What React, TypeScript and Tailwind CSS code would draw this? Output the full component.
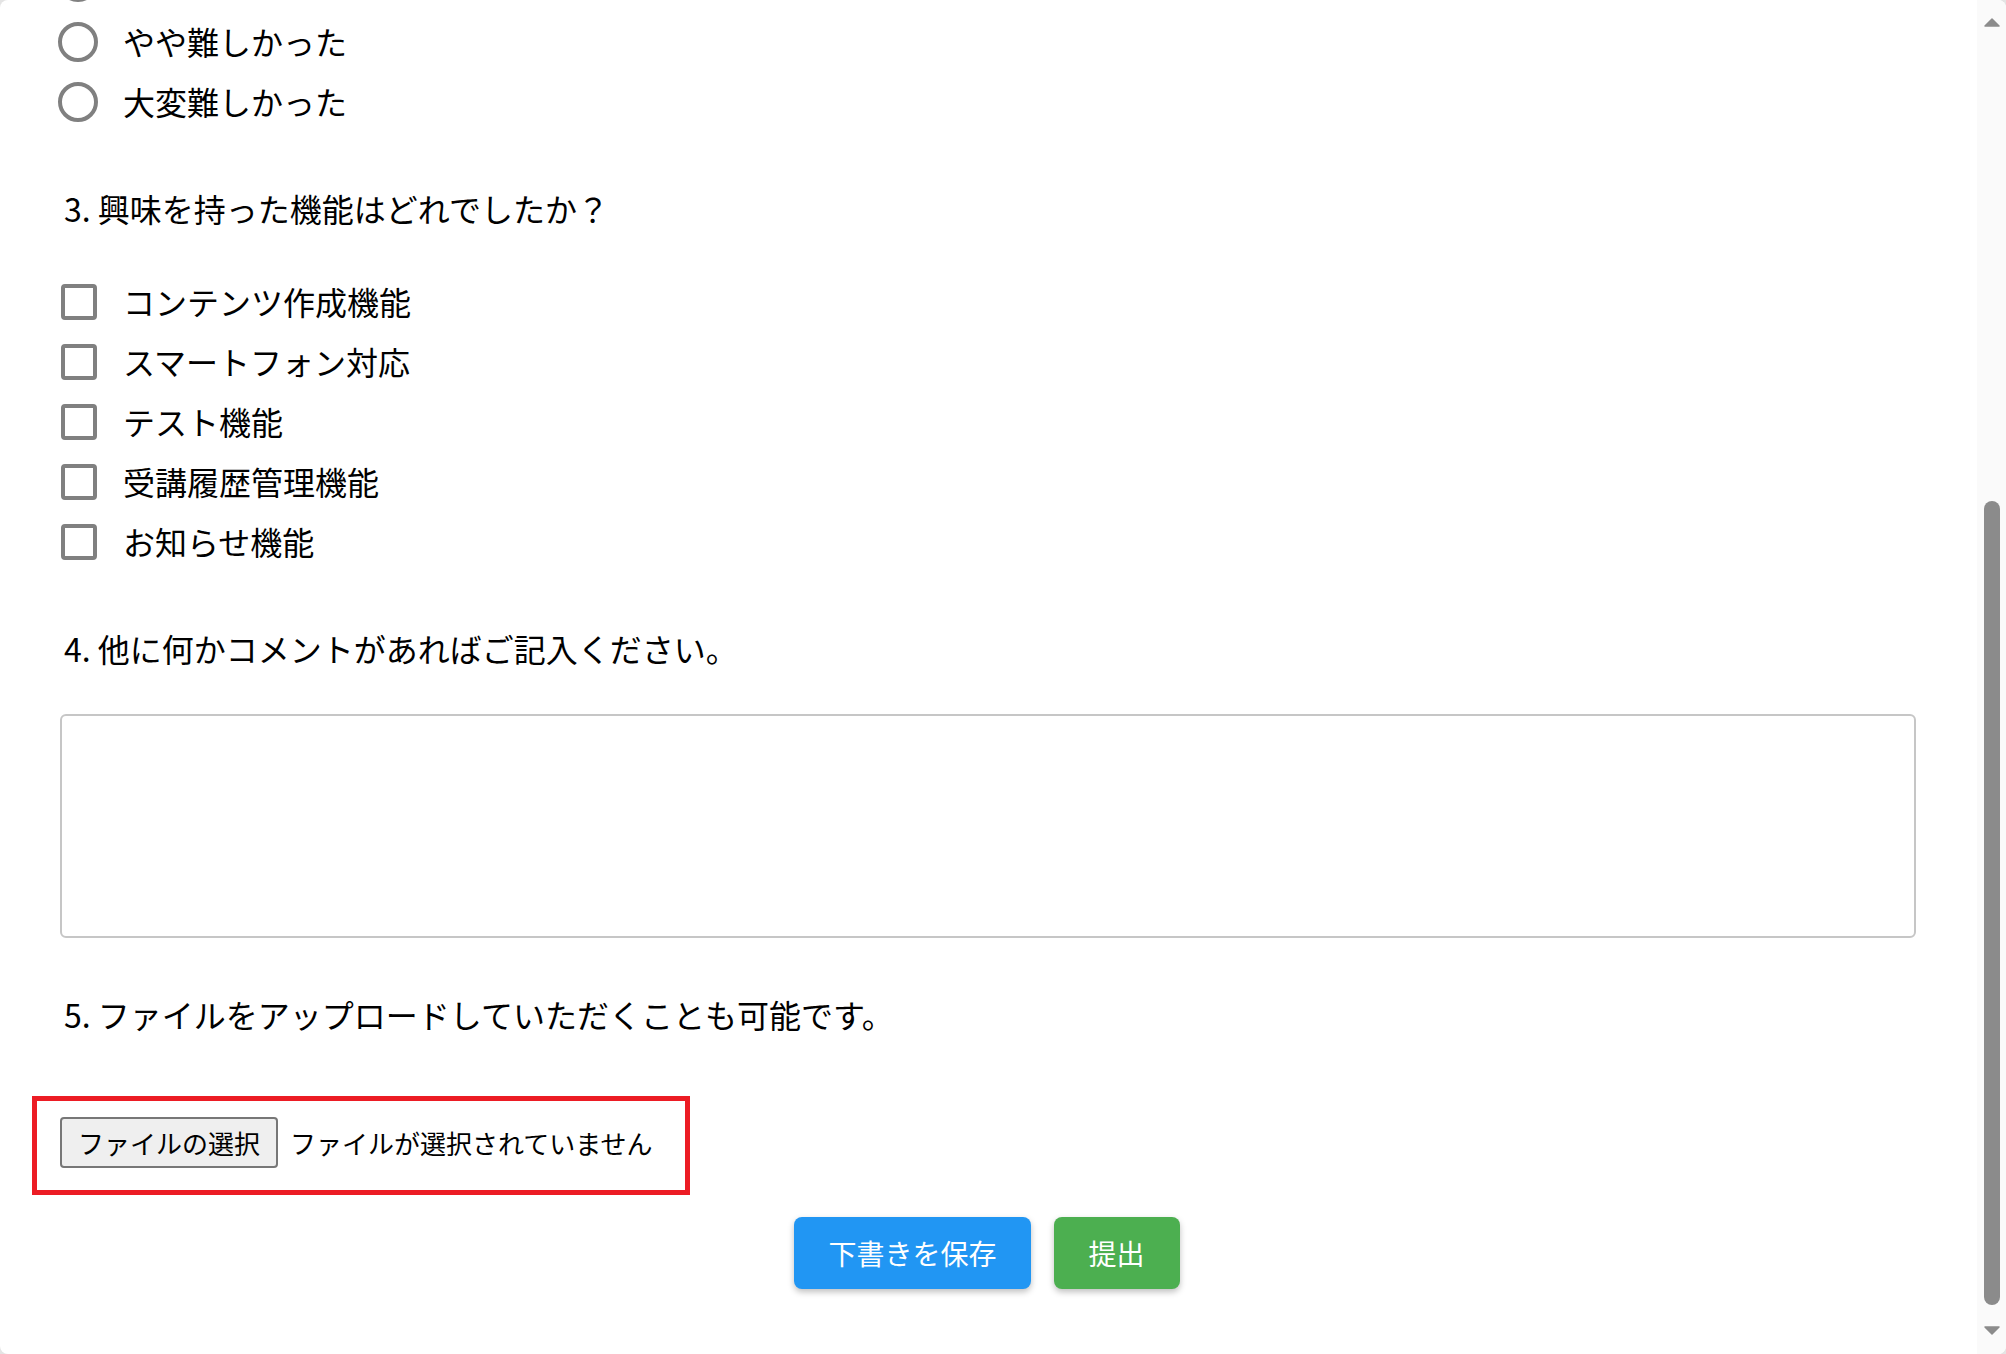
import React from 'react';

const radios = ['', 'やや難しかった', '大変難しかった'];
const features = ['コンテンツ作成機能', 'スマートフォン対応', 'テスト機能', '受講履歴管理機能', 'お知らせ機能'];

function Radio() {
  return <span className="block w-[40px] h-[40px] rounded-full border-4 border-[#808080] bg-white" />;
}

function Checkbox() {
  return <span className="block w-[36px] h-[36px] rounded-[4px] border-4 border-[#808080] bg-white" />;
}

function Question({ no, text, className = '' }: { no: number; text: string; className?: string }) {
  return (
    <div className={`ml-[6px] text-[32px] leading-[48px] whitespace-nowrap ${className}`}>
      {no}. {text}
    </div>
  );
}

function Scrollbar() {
  return (
    <div className="w-[29px] shrink-0 bg-[#fafafa] flex flex-col items-center">
      <svg className="mt-[18px]" width="16" height="9" viewBox="0 0 16 9">
        <polygon points="1,8 8,1 15,8" fill="#8c8c8c" stroke="#8c8c8c" strokeWidth="1.5" strokeLinejoin="round" />
      </svg>
      <div className="mt-[474px] w-[16px] h-[804px] rounded-full bg-[#8b8b8b]" />
      <svg className="mt-[21px]" width="16" height="9" viewBox="0 0 16 9">
        <polygon points="1,1 8,8 15,1" fill="#8c8c8c" stroke="#8c8c8c" strokeWidth="1.5" strokeLinejoin="round" />
      </svg>
    </div>
  );
}

export default function App() {
  return (
    <div className="h-screen w-full overflow-hidden bg-[#e4e4e4] font-['Noto_Sans_CJK_JP',sans-serif] text-black">
      <div className="flex h-full rounded-[8px] bg-white overflow-hidden">
        <main className="flex-1 min-w-0 overflow-hidden">
          <div className="mt-[-48px] pl-[58px] pr-[61px]">
            {/* first option is scrolled out of view, only its circle edge shows */}
            <div>
              {radios.map((r, i) => (
                <label key={i} className="flex items-center h-[60px]">
                  <span className="w-[40px] flex justify-center"><Radio /></span>
                  {r && <span className="ml-[25px] mt-[-2px] text-[32px] leading-none">{r}</span>}
                </label>
              ))}
            </div>

            <Question no={3} text="興味を持った機能はどれでしたか？" className="mt-[52px]" />

            <div className="mt-[40px]">
              {features.map(f => (
                <label key={f} className="flex items-center h-[60px]">
                  <span className="w-[40px] flex justify-center pl-px"><Checkbox /></span>
                  <span className="ml-[25px] mt-[-2px] text-[32px] leading-none">{f}</span>
                </label>
              ))}
            </div>

            <Question no={4} text="他に何かコメントがあればご記入ください。" className="mt-[52px]" />

            <textarea className="block mt-[42px] ml-[2px] w-[calc(100%-2px)] h-[224px] rounded-[6px] border-2 border-[#c6c6c6] bg-white resize-none outline-none" />

            <Question no={5} text="ファイルをアップロードしていただくことも可能です。" className="mt-[52px]" />

            <div className="mt-[58px] ml-[-26px] w-[658px] border-[5px] border-[#ec1c24] pt-[16px] pb-[22px] pl-[23px] flex items-center">
              <button className="h-[51px] px-[16px] rounded-[4px] border-2 border-[#777] bg-[#efefef] text-[26px] leading-none text-black whitespace-nowrap">
                ファイルの選択
              </button>
              <span className="ml-[12px] text-[26px] leading-none whitespace-nowrap">ファイルが選択されていません</span>
            </div>

            <div className="mt-[22px] flex justify-center gap-[23px]">
              <button className="h-[72px] px-[34px] rounded-[8px] bg-[#2196f3] text-white text-[28px] leading-none shadow-[0_3px_6px_rgba(0,0,0,0.25)]">
                下書きを保存
              </button>
              <button className="h-[72px] px-[35px] rounded-[8px] bg-[#4caf50] text-white text-[28px] leading-none shadow-[0_3px_6px_rgba(0,0,0,0.25)]">
                提出
              </button>
            </div>
          </div>
        </main>
        <Scrollbar />
      </div>
    </div>
  );
}
